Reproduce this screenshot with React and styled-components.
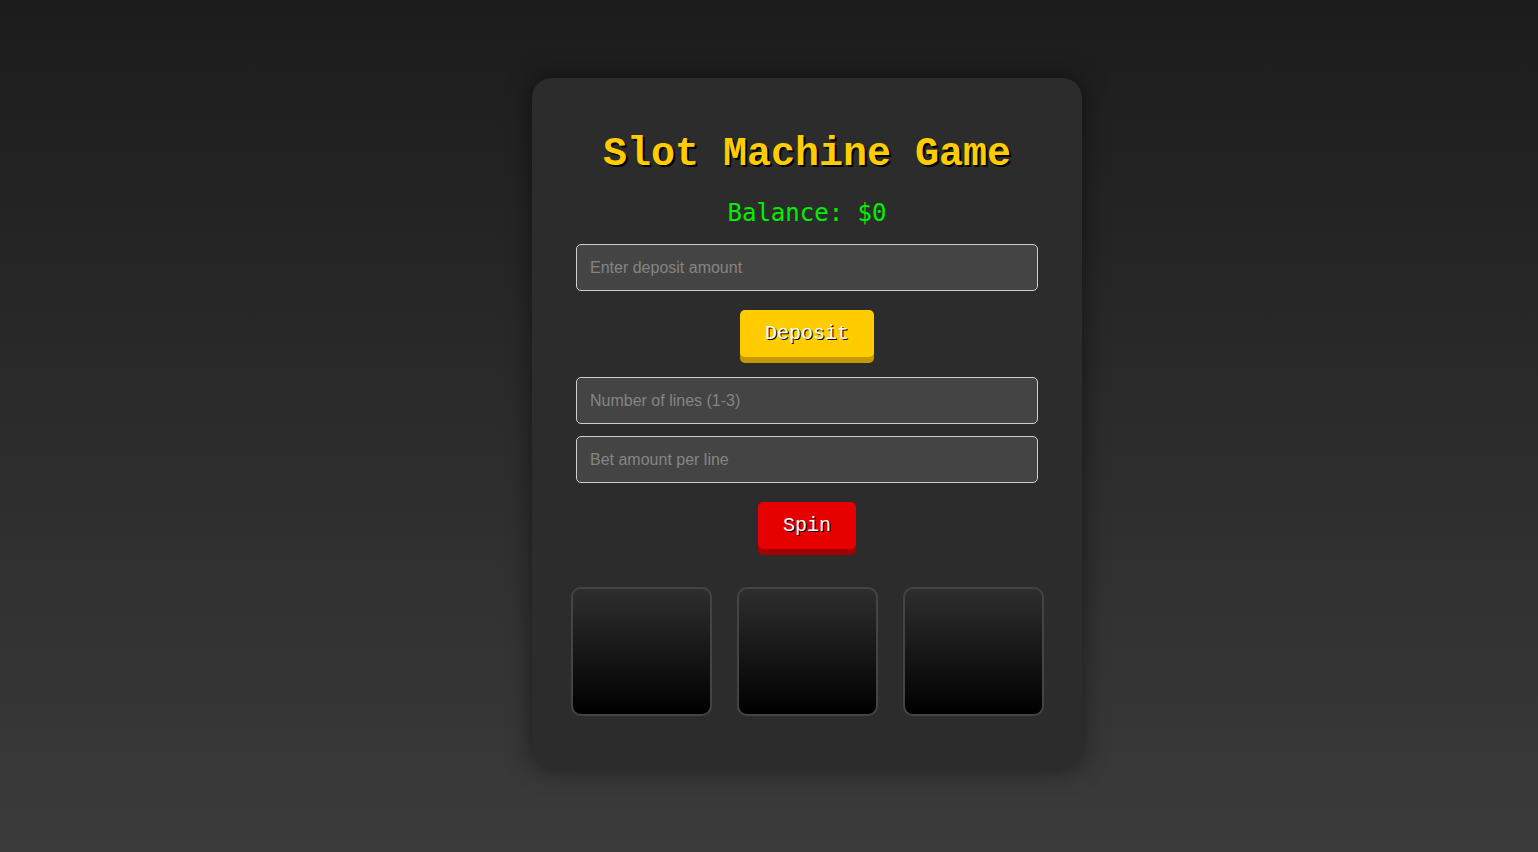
import React from "react";
import styled, { createGlobalStyle } from "styled-components";

const GlobalStyle = createGlobalStyle`
  html, body {
    margin: 0;
    padding: 0;
  }
  body {
    min-height: 100vh;
    background: linear-gradient(to bottom, #1c1c1c, #3b3b3b);
    font-family: "Liberation Sans", Arial, sans-serif;
  }
`;

const Page = styled.div`
  min-height: 100vh;
  box-sizing: border-box;
  padding: 0 0 6px 76px;
  display: flex;
  align-items: center;
  justify-content: center;
`;

const Card = styled.div`
  width: 550px;
  height: 690px;
  box-sizing: border-box;
  padding: 40px 38px;
  background: #2c2c2c;
  border-radius: 20px;
  box-shadow: 0 0 25px rgba(0, 0, 0, 0.5);
  display: flex;
  flex-direction: column;
  align-items: center;
`;

const Title = styled.h1`
  margin: 14px 0 20px;
  font-family: "Liberation Mono", "Courier New", monospace;
  font-weight: bold;
  font-size: 40px;
  line-height: 46px;
  color: #ffcc00;
  text-shadow: 2px 2px 0 #000;
`;

const Balance = styled.div`
  font-family: "DejaVu Sans Mono", Consolas, monospace;
  font-size: 24px;
  line-height: 30px;
  color: #00f000;
  margin-bottom: 16px;
`;

const Input = styled.input`
  width: 462px;
  height: 47px;
  box-sizing: border-box;
  padding: 0 13px;
  background: #444;
  border: 1px solid #cfcfcf;
  border-radius: 5px;
  color: #fff;
  font-family: "Liberation Sans", Arial, sans-serif;
  font-size: 16px;
  outline: none;
  margin: 0 0 ${(p) => p.$gap ?? 12}px;

  &::placeholder {
    color: #858585;
  }
`;

const Button = styled.button`
  height: 47px;
  padding: 0 25px;
  border: none;
  border-radius: 5px;
  background: ${(p) => p.$bg};
  box-shadow: 0 6px 0 ${(p) => p.$shade};
  color: #fff;
  font-family: "Liberation Mono", "Courier New", monospace;
  font-size: 20px;
  text-shadow: 1px 1px 0 #000;
  cursor: pointer;
  margin: ${(p) => p.$top}px 0 ${(p) => p.$bottom}px;
`;

const Reels = styled.div`
  display: flex;
  gap: 25px;
  width: 100%;
  justify-content: center;
`;

const Reel = styled.div`
  width: 141px;
  height: 129px;
  box-sizing: border-box;
  border: 2px solid #444;
  border-radius: 10px;
  background: linear-gradient(to bottom, #2e2e2e, #000);
`;

export default function App() {
  return (
    <>
      <GlobalStyle />
      <Page>
        <Card>
          <Title>Slot Machine Game</Title>
          <Balance>Balance: $0</Balance>
          <Input type="number" placeholder="Enter deposit amount" $gap={0} />
          <Button $bg="#ffcc00" $shade="#c49a00" $top={19} $bottom={20}>
            Deposit
          </Button>
          <Input type="number" placeholder="Number of lines (1-3)" />
          <Input type="number" placeholder="Bet amount per line" $gap={0} />
          <Button $bg="#e60000" $shade="#a30000" $top={19} $bottom={38}>
            Spin
          </Button>
          <Reels>
            <Reel />
            <Reel />
            <Reel />
          </Reels>
        </Card>
      </Page>
    </>
  );
}
